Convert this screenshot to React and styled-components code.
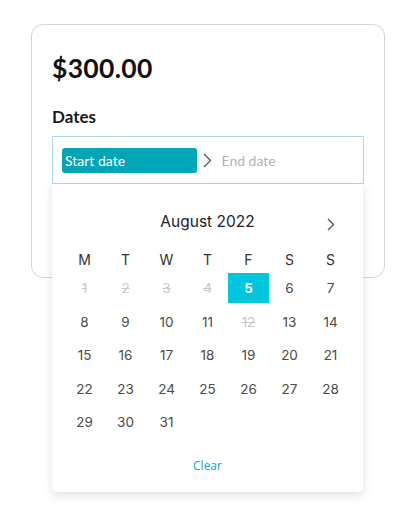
import React from 'react';
import styled, {createGlobalStyle} from 'styled-components';

const GlobalStyle = createGlobalStyle`
    body {
        margin: 0;
        background: #ffffff;
        font-family: "Lato", "Noto Sans", sans-serif;
    }
`;

const Page = styled.div`
    min-height: 523px;
    box-sizing: border-box;
    padding: 24px 0 0 31px;
`;

const Card = styled.div`
    position: relative;
    width: 354px;
    height: 254px;
    box-sizing: border-box;
    border: 1px solid #d4d4d4;
    border-radius: 12px;
    padding: 28px 20px 0 20px;
`;

const Price = styled.div`
    font-size: 26.5px;
    font-weight: 700;
    color: #111;
    letter-spacing: 0.3px;
    line-height: 30px;
`;

const Label = styled.div`
    margin-top: 24px;
    font-size: 17px;
    font-weight: 700;
    color: #1a1a1a;
    line-height: 20px;
`;

const InputBox = styled.div`
    margin-top: 9px;
    height: 48px;
    box-sizing: border-box;
    border: 1px solid #a9d9ea;
    display: flex;
    align-items: center;
    padding-left: 9px;
`;

const Pill = styled.div`
    width: 135px;
    height: 25px;
    box-sizing: border-box;
    border-radius: 3px;
    background: ${props => props.active ? '#00a6b6' : 'transparent'};
    color: ${props => props.active ? '#ffffff' : '#b3b3b3'};
    font-size: 14px;
    line-height: 25px;
    padding-left: 3px;
`;

const Arrow = styled.div`
    display: flex;
    margin-left: 6px;
`;

const Plain = styled.div`
    color: #b3b3b3;
    font-size: 14px;
    margin-left: 9px;
`;

const Popup = styled.div`
    position: absolute;
    left: 20px;
    top: 159px;
    width: 311px;
    height: 308px;
    box-sizing: border-box;
    background: #ffffff;
    border-radius: 4px;
    box-shadow: 0 3px 10px rgba(120, 150, 150, 0.28);
    padding: 26px 12px 0 12px;
    font-family: "Inter", "Noto Sans", sans-serif;
`;

const Header = styled.div`
    position: relative;
    height: 22px;
    display: flex;
    align-items: center;
    justify-content: center;
    font-size: 15.5px;
    font-weight: 400;
    color: #222;
`;

const NextBtn = styled.div`
    position: absolute;
    right: 16px;
    top: 8px;
    display: flex;
`;

const Grid = styled.div`
    display: grid;
    grid-template-columns: repeat(7, 41px);
    grid-auto-rows: ${props => props.$rowH}px;
    row-gap: ${props => props.$gap}px;
    margin-top: ${props => props.$top}px;
`;

const WeekDay = styled.div`
    display: flex;
    align-items: center;
    justify-content: center;
    font-size: 14px;
    color: #333;
`;

const Day = styled.div`
    display: flex;
    align-items: center;
    justify-content: center;
    font-size: 13.5px;
    color: ${props => props.$selected ? '#ffffff' : props.$disabled ? '#c8c8c8' : '#4a4a4a'};
    background: ${props => props.$selected ? '#00c7dd' : 'transparent'};
    font-weight: ${props => props.$selected ? 700 : 400};
    text-decoration: ${props => props.$disabled ? 'line-through' : 'none'};
`;

const Clear = styled.div`
    margin-top: 21px;
    text-align: center;
    font-size: 12px;
    line-height: 16px;
    color: #17a6bd;
    font-family: "Open Sans", sans-serif;
`;

const Chevron = ({color, h}) => (
    <svg width={h / 2 + 2} height={h} viewBox={`0 0 ${h / 2 + 2} ${h}`}>
        <path d={`M1 1 L${h / 2} ${h / 2} L1 ${h - 1}`} fill="none" stroke={color} strokeWidth="1.3" />
    </svg>
);

const weekdays = ['M', 'T', 'W', 'T', 'F', 'S', 'S'];
const disabledDays = [1, 2, 3, 4, 12];

export default class App extends React.Component {
    render() {
        const days = [];
        for (let d = 1; d <= 31; d++) {
            days.push(
                <Day key={d} $selected={d === 5} $disabled={disabledDays.includes(d)}>{d}</Day>
            );
        }
        return (
            <Page>
                <GlobalStyle />
                <Card>
                    <Price>$300.00</Price>
                    <Label>Dates</Label>
                    <InputBox>
                        <Pill active>Start date</Pill>
                        <Arrow><Chevron color="#555" h={15} /></Arrow>
                        <Plain>End date</Plain>
                    </InputBox>
                    <Popup>
                        <Header>
                            August 2022
                            <NextBtn><Chevron color="#555" h={13} /></NextBtn>
                        </Header>
                        <Grid $rowH={26} $gap={0} $top={14}>
                            {weekdays.map((w, i) => <WeekDay key={i}>{w}</WeekDay>)}
                        </Grid>
                        <Grid $rowH={30} $gap={3.5} $top={1}>
                            {days}
                        </Grid>
                        <Clear>Clear</Clear>
                    </Popup>
                </Card>
            </Page>
        );
    }
}
